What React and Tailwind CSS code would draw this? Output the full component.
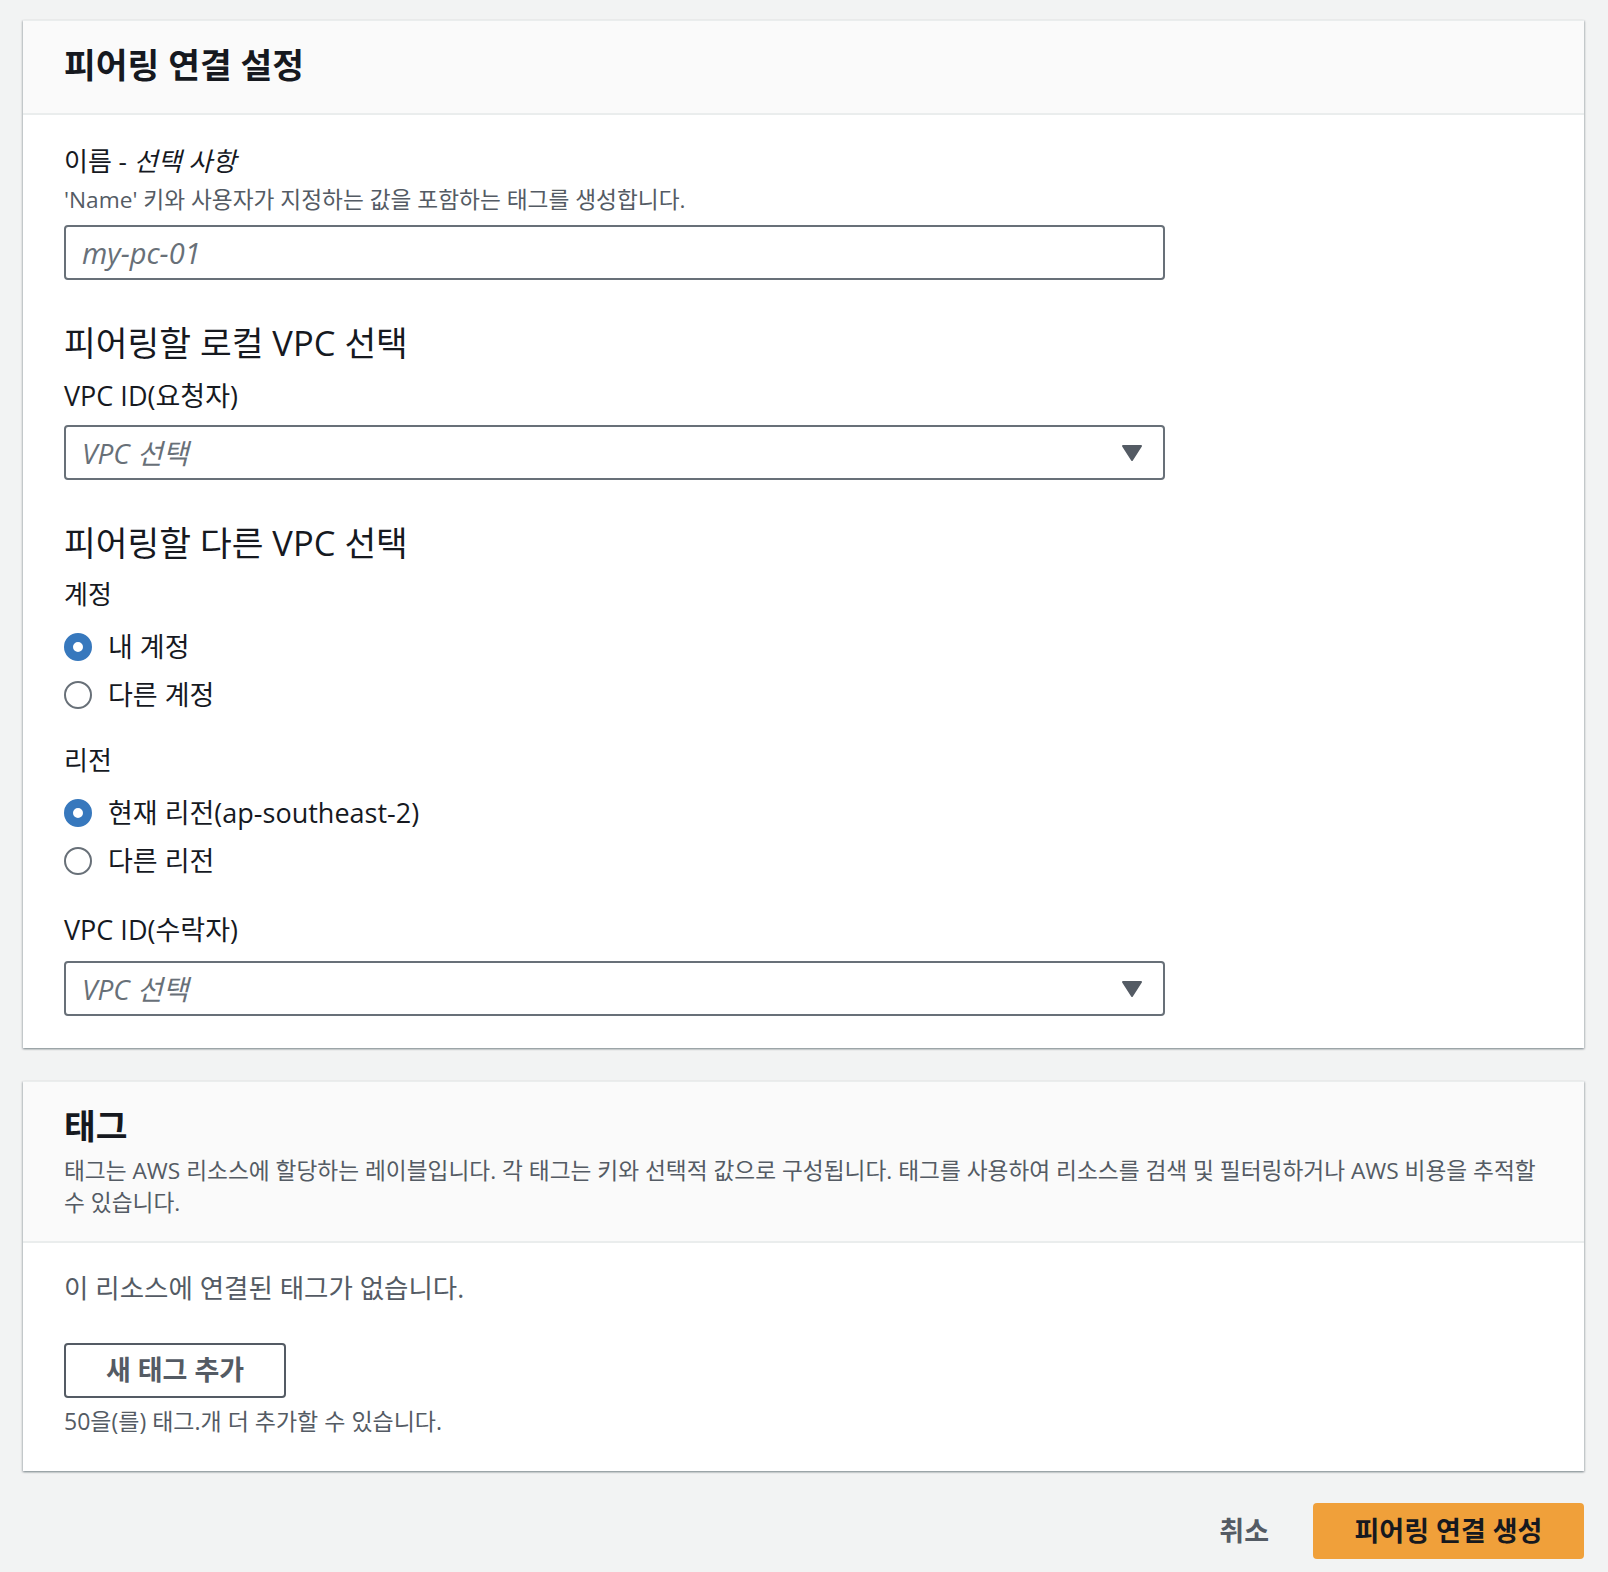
import React from 'react';

// 피어링 연결 생성 폼 (AWS 콘솔 스타일)

function Triangle() {
  return (
    <svg width="22" height="18" viewBox="0 0 22 18" className="shrink-0">
      <path d="M2 2H20L11 16Z" fill="#545b64" stroke="#545b64" strokeWidth="2" strokeLinejoin="round" />
    </svg>
  );
}

function Select({ placeholder }) {
  return (
    <div className="w-[1101px] h-[55px] border-2 border-[#687078] rounded-[4px] bg-white flex items-center justify-between pl-[16px] pr-[20px]">
      <span className="italic text-[28px] leading-[36px] text-[#687078]">{placeholder}</span>
      <Triangle />
    </div>
  );
}

function Radio({ checked, label }) {
  return (
    <label className="flex items-center gap-4 h-[48px] cursor-pointer">
      <span
        className={
          checked
            ? 'shrink-0 w-7 h-7 rounded-full border-[9px] border-[#3778bd] bg-white'
            : 'shrink-0 w-7 h-7 rounded-full border-2 border-[#687078] bg-white'
        }
      />
      <span className="text-[27px] leading-[36px] text-[#16191f]">{label}</span>
    </label>
  );
}

const cardShadow =
  'shadow-[0_1px_2px_0_rgba(0,28,36,0.3),1px_1px_2px_0_rgba(0,28,36,0.15),-1px_1px_2px_0_rgba(0,28,36,0.15)]';

export default function App() {
  return (
    <div className="min-h-screen bg-[#f2f3f3] pt-5 pb-[14px] pl-[23px] pr-[24px] font-['Open_Sans','Noto_Sans_CJK_KR',sans-serif] text-[#16191f]">
      {/* 피어링 연결 설정 */}
      <section className={`bg-white border-t border-[#eaeded] ${cardShadow}`}>
        <div className="h-[94px] bg-[#fafafa] border-b-2 border-[#eaeded] px-[41px] flex items-center pb-[5px]">
          <h2 className="text-[34.5px] leading-[44px] font-bold">피어링 연결 설정</h2>
        </div>

        <div className="px-[41px] pt-[29px] pb-[32px]">
          <div className="text-[26px] leading-[35px]">
            이름 - <span className="italic">선택 사항</span>
          </div>
          <p className="mt-[5px] text-[22.7px] leading-[31px] text-[#545b64]">
            'Name' 키와 사용자가 지정하는 값을 포함하는 태그를 생성합니다.
          </p>
          <input
            placeholder="my-pc-01"
            className="mt-[10px] block w-[1101px] h-[55px] border-2 border-[#687078] rounded-[4px] pl-[16px] text-[29px] italic placeholder:text-[#687078] outline-none"
          />

          <h3 className="mt-[41px] text-[34.5px] leading-[44px]">피어링할 로컬 VPC 선택</h3>
          <div className="mt-[13px] text-[27px] leading-[35px]">VPC ID(요청자)</div>
          <div className="mt-[12px]">
            <Select placeholder="VPC 선택" />
          </div>

          <h3 className="mt-[41px] text-[34.5px] leading-[44px]">피어링할 다른 VPC 선택</h3>
          <div className="mt-[12px] text-[26px] leading-[35px]">계정</div>
          <div className="mt-[11px] flex flex-col">
            <Radio checked label="내 계정" />
            <Radio label="다른 계정" />
          </div>

          <div className="mt-[24px] text-[26px] leading-[35px]">리전</div>
          <div className="mt-[11px] flex flex-col">
            <Radio checked label="현재 리전(ap-southeast-2)" />
            <Radio label="다른 리전" />
          </div>

          <div className="mt-[27px] text-[27px] leading-[35px]">VPC ID(수락자)</div>
          <div className="mt-[14px]">
            <Select placeholder="VPC 선택" />
          </div>
        </div>
      </section>

      {/* 태그 */}
      <section className={`mt-[33px] bg-white border-t border-[#eaeded] ${cardShadow}`}>
        <div className="bg-[#fafafa] border-b-2 border-[#eaeded] px-[41px] pt-[22px] pb-[22px]">
          <h2 className="text-[34.5px] leading-[44px] font-bold">태그</h2>
          <p className="mt-[7px] text-[22.7px] leading-[32px] text-[#545b64]">
            태그는 AWS 리소스에 할당하는 레이블입니다. 각 태그는 키와 선택적 값으로 구성됩니다. 태그를 사용하여 리소스를 검색 및 필터링하거나 AWS 비용을 추적할 수 있습니다.
          </p>
        </div>
        <div className="px-[41px] pt-[27px] pb-[34px]">
          <p className="text-[26.5px] leading-[36px] text-[#545b64]">이 리소스에 연결된 태그가 없습니다.</p>
          <button className="mt-[37px] w-[222px] h-[55px] border-2 border-[#545b64] rounded-[4px] bg-white text-[27px] font-bold text-[#545b64] flex items-center justify-center">
            새 태그 추가
          </button>
          <p className="mt-[8px] text-[23px] leading-[31px] text-[#545b64]">
            50을(를) 태그.개 더 추가할 수 있습니다.
          </p>
        </div>
      </section>

      {/* 하단 버튼 */}
      <div className="mt-[32px] flex justify-end items-center gap-[44px]">
        <button className="text-[27px] font-bold text-[#545b64]">취소</button>
        <button className="w-[271px] h-[56px] rounded-[4px] bg-[#f0a03a] text-[27px] font-bold text-[#16191f]">
          피어링 연결 생성
        </button>
      </div>
    </div>
  );
}
